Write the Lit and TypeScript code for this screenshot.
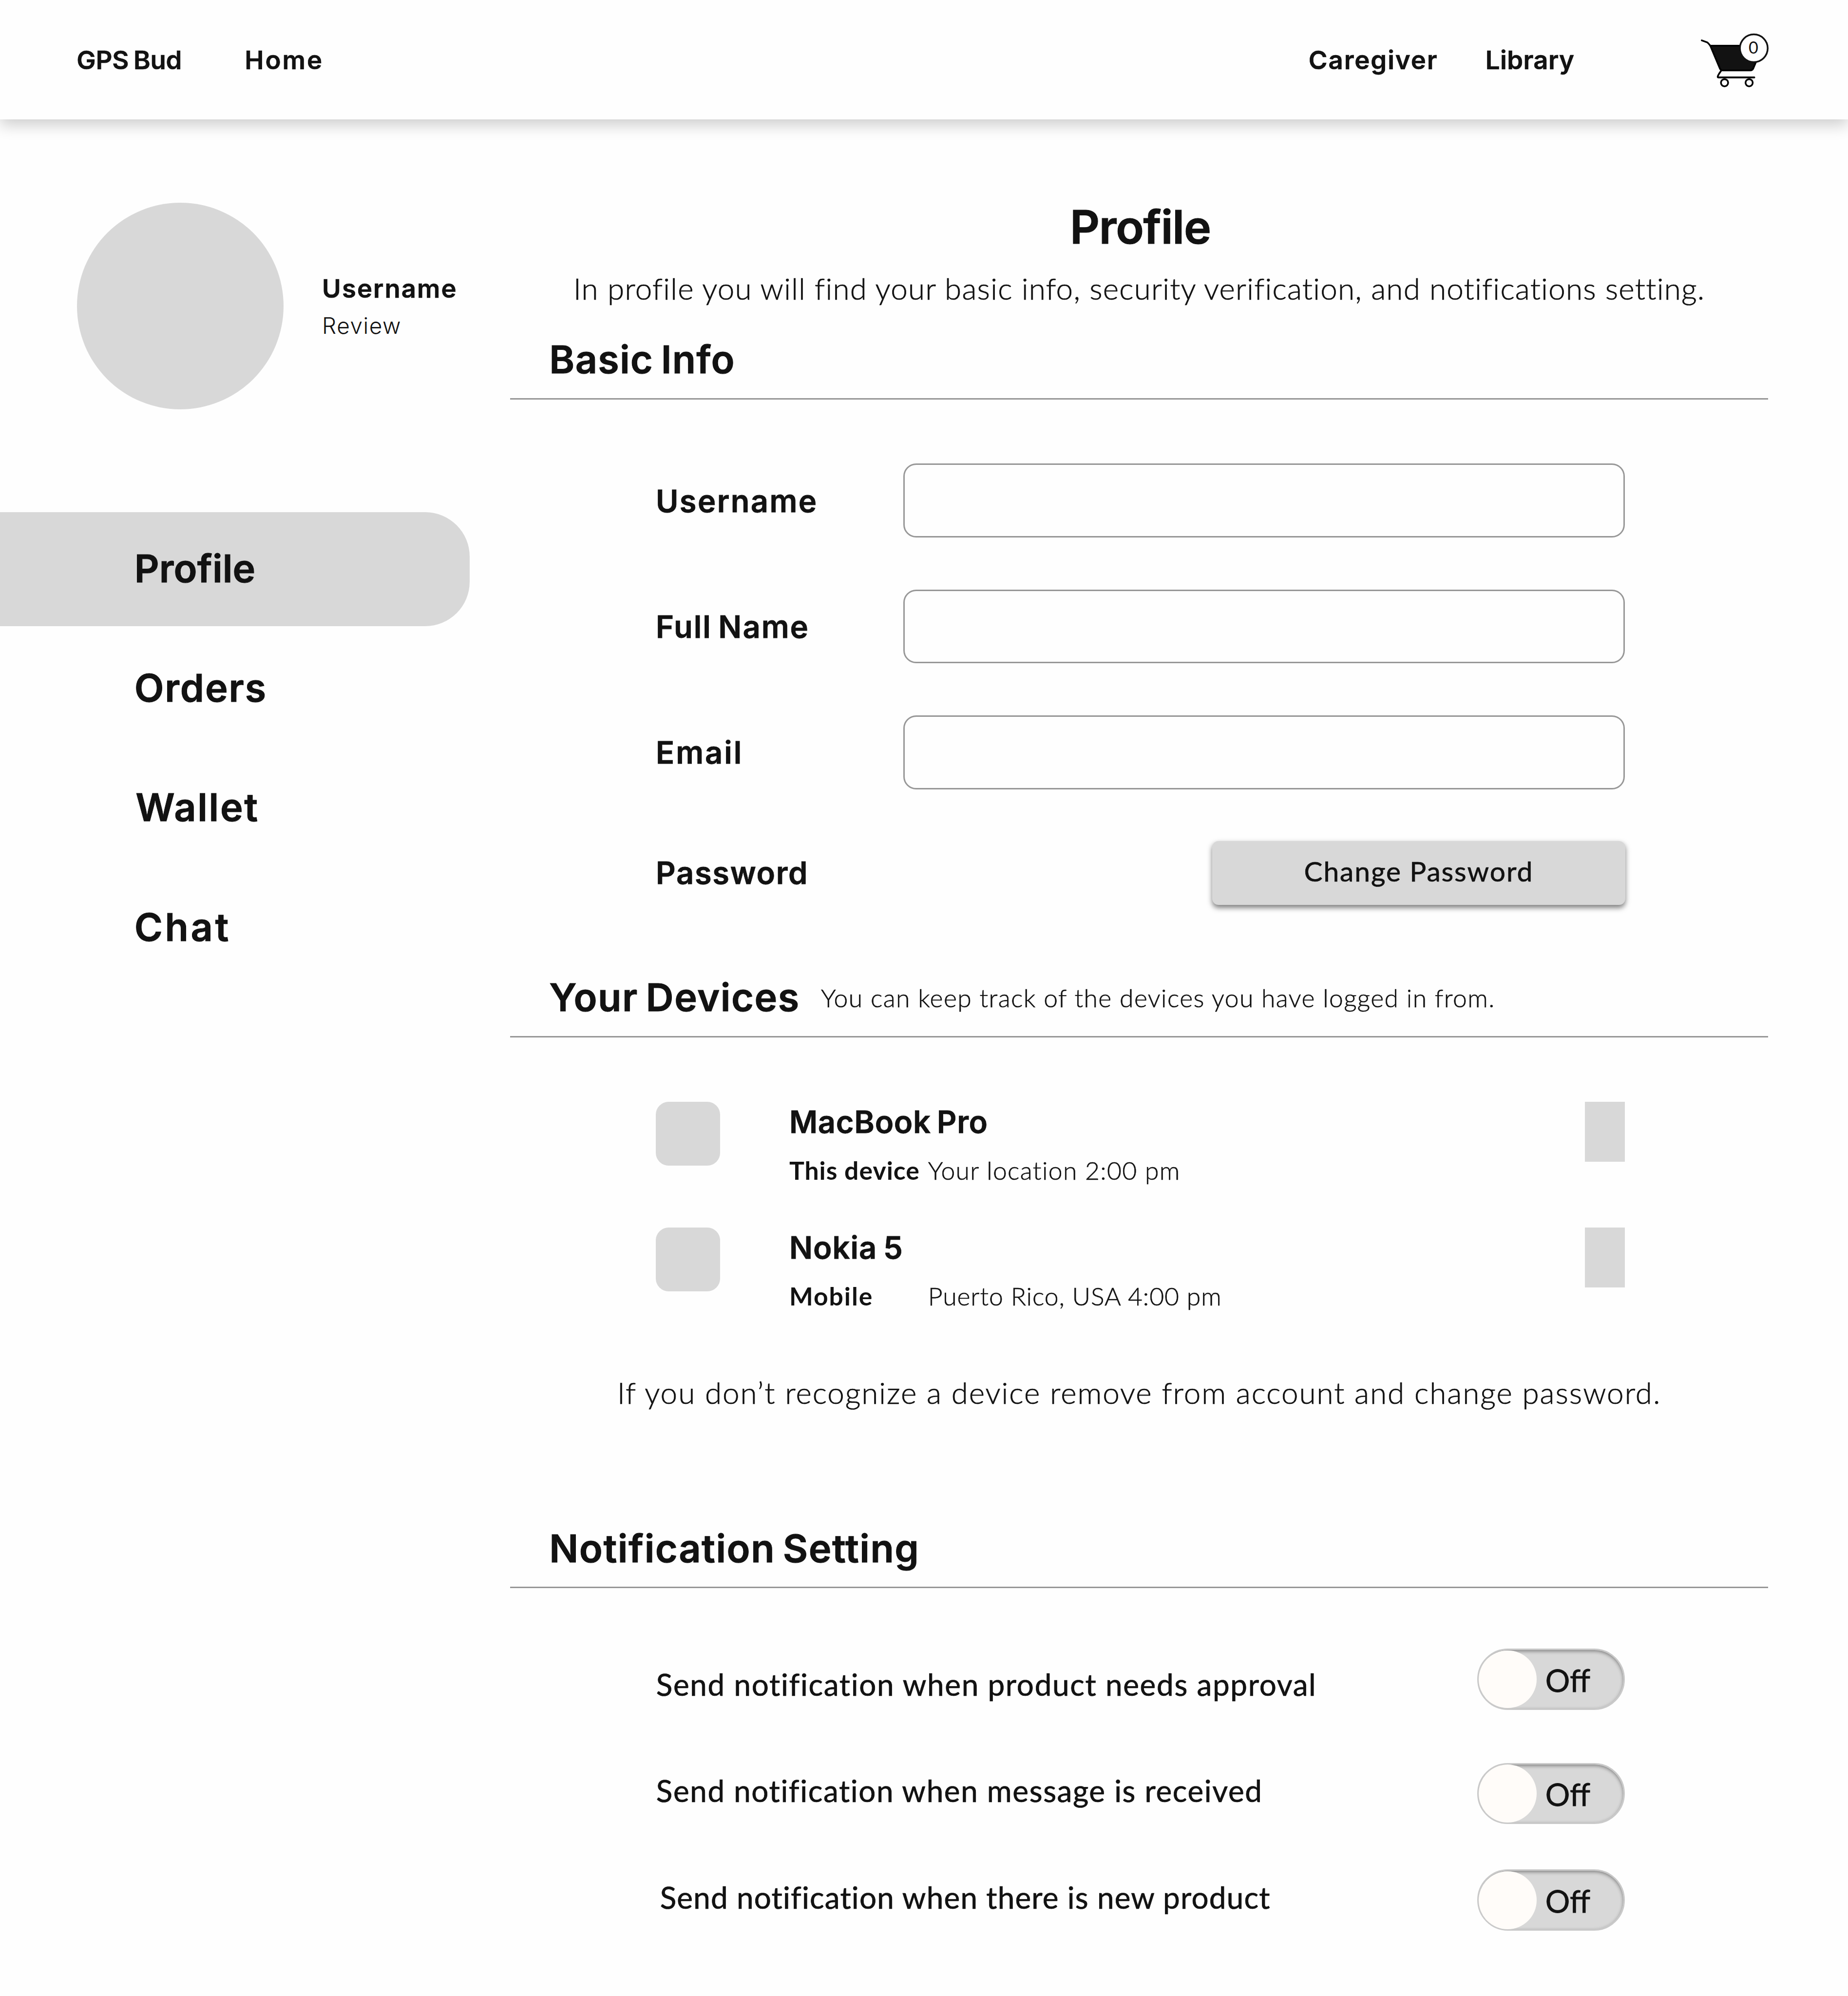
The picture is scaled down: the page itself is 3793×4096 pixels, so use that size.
import { LitElement, html, css, unsafeCSS } from 'lit';
import { customElement, property } from 'lit/decorators.js';
import { classMap } from 'lit/directives/class-map.js';

// Layout is authored on a 4320-unit wide canvas and drawn on a 3793px wide page.
const SCALE = 3793 / 4320;
const u = (n: number) => unsafeCSS(`${+(n * SCALE).toFixed(3)}px`);

const typography = css`
  *,
  *::before {
    box-sizing: border-box;
  }
  h1,
  h2,
  p,
  input,
  button {
    margin: 0;
    padding: 0;
  }
  .display {
    height: 1em;
    font-family: Inter, 'Liberation Sans', sans-serif;
    font-weight: 600;
    line-height: 1;
    white-space: nowrap;
    word-spacing: -0.07em;
    color: #121212;
    -webkit-text-stroke: 0.012em #121212;
  }
  .text {
    height: 1em;
    font-family: Lato, 'Open Sans', sans-serif;
    font-weight: 300;
    line-height: 1;
    white-space: nowrap;
    color: #121212;
    -webkit-text-stroke: 0.012em #121212;
  }
`;

@customElement('cart-icon')
export class CartIcon extends LitElement {
  @property({ type: Number }) count = 0;

  static styles = css`
    :host {
      display: block;
      width: ${u(180)};
      height: ${u(150)};
    }
    .icon {
      display: block;
      width: 100%;
      height: 100%;
    }
    .line {
      fill: none;
      stroke: #000;
      stroke-width: 4;
      stroke-linecap: round;
      stroke-linejoin: round;
    }
    .basket {
      fill: #121212;
      stroke: #000;
      stroke-width: 4;
      stroke-linejoin: round;
    }
    .badge {
      fill: #fefefe;
      stroke: #121212;
      stroke-width: 4;
    }
    .count {
      font-family: Lato, sans-serif;
      font-size: 39px;
      font-weight: 400;
      fill: #121212;
      text-anchor: middle;
    }
  `;

  render() {
    return html`
      <svg class="icon" viewBox="60 20 180 150">
        <path class="line" d="M78 54 L90.500 58.500 Q92.500 59.500 98 66.500" />
        <path class="basket" d="M98 66.500 H221 L198.500 119.500 Q196 124.300 192 124.300 H126.500 Q122.500 124.300 120.500 120 Z" />
        <path class="line" d="M123 125.500 C119 131 115.500 136 115.300 139 Q115.300 140.600 117 140.600 H201" />
        <circle class="line" cx="131.300" cy="153" r="8.400" />
        <circle class="line" cx="188.800" cy="153" r="8.400" />
        <circle class="badge" cx="199.700" cy="72.500" r="32.500" />
        <text class="count" x="198.800" y="84.500">${this.count}</text>
      </svg>
    `;
  }
}

@customElement('toggle-switch')
export class ToggleSwitch extends LitElement {
  static styles = [
    typography,
    css`
      :host {
        display: block;
      }
      .track {
        display: flex;
        align-items: center;
        gap: ${u(20.5)};
        width: ${u(345)};
        height: ${u(143)};
        border: ${u(4)} solid #c9c9c9;
        border-radius: ${u(72)};
        background: #d8d8d8;
        box-shadow: inset 0 ${u(3)} ${u(9)} rgba(0, 0, 0, 0.4);
      }
      .knob {
        flex: none;
        width: ${u(135.5)};
        height: ${u(135.5)};
        border-radius: 50%;
        background: #fffcf9;
      }
      .state {
        padding-top: ${u(1.8)};
        font-size: ${u(72)};
        font-weight: 400;
      }
    `,
  ];

  render() {
    return html`<div class="track"><span class="knob"></span><span class="text state">Off</span></div>`;
  }
}

@customElement('app-header')
export class AppHeader extends LitElement {
  static styles = [
    typography,
    css`
      :host {
        display: block;
        position: relative;
        z-index: 1;
      }
      .bar {
        display: grid;
        grid-template-columns: ${u(393)} ${u(2487)} ${u(413.5)} ${u(487.5)} auto;
        align-items: center;
        height: ${u(279)};
        padding: ${u(1.7)} 0 0 ${u(179)};
        background: #fefefe;
        box-shadow: 0 ${u(12)} ${u(34)} rgba(0, 0, 0, 0.2);
      }
      .link {
        font-size: ${u(60)};
      }
      .brand {
        letter-spacing: ${u(-0.15)};
      }
      .home {
        letter-spacing: ${u(3.4)};
      }
      .caregiver {
        letter-spacing: ${u(2.16)};
      }
      .library {
        letter-spacing: ${u(0.46)};
      }
      .cart {
        align-self: start;
        margin-top: ${u(58.3)};
      }
    `,
  ];

  render() {
    return html`
      <header class="bar">
        <a class="display link brand">GPS Bud</a>
        <a class="display link home">Home</a>
        <a class="display link caregiver">Caregiver</a>
        <a class="display link library">Library</a>
        <cart-icon class="cart" .count=${0}></cart-icon>
      </header>
    `;
  }
}

@customElement('profile-sidebar')
export class ProfileSidebar extends LitElement {
  static styles = [
    typography,
    css`
      :host {
        display: block;
      }
      .sidebar {
        padding-top: ${u(195)};
      }
      .user {
        display: flex;
        gap: ${u(90)};
        margin-left: ${u(180)};
      }
      .avatar {
        width: ${u(483)};
        height: ${u(483)};
        border-radius: 50%;
        background: #d8d8d8;
      }
      .who {
        display: flex;
        flex-direction: column;
        gap: ${u(30.6)};
        padding-top: ${u(170.2)};
      }
      .name {
        font-size: ${u(60)};
        letter-spacing: ${u(2.33)};
      }
      .review {
        font-size: ${u(52.4)};
        font-weight: 300;
        letter-spacing: ${u(1.7)};
        -webkit-text-stroke: 0;
      }
      .nav {
        display: flex;
        flex-direction: column;
        gap: ${u(12.4)};
        margin-top: ${u(240)};
      }
      .item {
        display: flex;
        align-items: center;
        width: ${u(1098)};
        height: ${u(267)};
        padding: 0 0 ${u(4)} ${u(314)};
        border-radius: 0 ${u(104)} ${u(104)} 0;
        font-size: ${u(90)};
      }
      .active {
        background: #d8d8d8;
      }
      .profile {
        letter-spacing: ${u(0.13)};
      }
      .orders {
        letter-spacing: ${u(2.11)};
      }
      .wallet {
        padding-left: ${u(317)};
        letter-spacing: ${u(3.03)};
      }
      .chat {
        letter-spacing: ${u(5.3)};
      }
    `,
  ];

  render() {
    const items = ['Profile', 'Orders', 'Wallet', 'Chat'];
    return html`
      <aside class="sidebar">
        <div class="user">
          <div class="avatar"></div>
          <div class="who">
            <div class="display name">Username</div>
            <div class="display review">Review</div>
          </div>
        </div>
        <nav class="nav">
          ${items.map(
            (label, i) => html`<a class=${classMap({ display: true, item: true, active: i === 0, [label.toLowerCase()]: true })}>${label}</a>`,
          )}
        </nav>
      </aside>
    `;
  }
}

@customElement('basic-info')
export class BasicInfo extends LitElement {
  static styles = [
    typography,
    css`
      :host {
        display: block;
      }
      .form {
        display: flex;
        flex-direction: column;
        gap: ${u(121)};
        padding: ${u(150)} ${u(335)} 0 ${u(340)};
      }
      .row {
        display: grid;
        grid-template-columns: ${u(578.5)} ${u(1686.5)};
        align-items: center;
      }
      .label {
        padding-top: ${u(0.9)};
        font-size: ${u(72)};
      }
      .username {
        letter-spacing: ${u(2.7)};
      }
      .full {
        letter-spacing: ${u(2.3)};
      }
      .email {
        letter-spacing: ${u(3.35)};
      }
      .password {
        padding-top: 0;
        letter-spacing: ${u(1.94)};
      }
      .input {
        width: 100%;
        height: ${u(173)};
        border: 3px solid #979797;
        border-radius: ${u(30)};
        background: #fefefe;
        outline: none;
      }
      .action {
        justify-self: end;
        width: ${u(965)};
        height: ${u(150)};
        margin-right: ${u(-1)};
        padding-bottom: ${u(9)};
        border: 0;
        border-radius: ${u(15)};
        background: #d8d8d8;
        box-shadow: 0 ${u(6)} ${u(12)} rgba(0, 0, 0, 0.5);
        font-size: ${u(64.7)};
        font-weight: 400;
        letter-spacing: ${u(2.2)};
      }
    `,
  ];

  render() {
    const fields = [
      { label: 'Username', cls: 'username' },
      { label: 'Full Name', cls: 'full' },
      { label: 'Email', cls: 'email' },
    ];
    return html`
      <div class="form">
        ${fields.map(
          (f) => html`
            <div class="row">
              <label class=${`display label ${f.cls}`}>${f.label}</label>
              <input class="input" />
            </div>
          `,
        )}
        <div class="row">
          <span class="display label password">Password</span>
          <button class="text action">Change Password</button>
        </div>
      </div>
    `;
  }
}

@customElement('device-list')
export class DeviceList extends LitElement {
  static styles = [
    typography,
    css`
      :host {
        display: block;
      }
      .list {
        display: flex;
        flex-direction: column;
        gap: ${u(104)};
        padding: ${u(150)} ${u(335)} 0 ${u(340)};
      }
      .device {
        display: flex;
        align-items: flex-start;
        height: ${u(190)};
      }
      .thumb {
        width: ${u(150)};
        height: ${u(150)};
        border-radius: ${u(30)};
        background: #d8d8d8;
      }
      .info {
        display: flex;
        flex-direction: column;
        gap: ${u(47.4)};
        padding: ${u(11.8)} 0 0 ${u(162)};
      }
      .name {
        font-size: ${u(72)};
        letter-spacing: ${u(0.76)};
      }
      .name.mobile {
        letter-spacing: ${u(1.2)};
      }
      .meta {
        display: grid;
        grid-template-columns: ${u(324.5)} auto;
        font-size: ${u(58.8)};
      }
      .kind {
        font-weight: 700;
        letter-spacing: ${u(1.2)};
        -webkit-text-stroke: 0;
      }
      .kind.mobile {
        letter-spacing: ${u(2.3)};
      }
      .place {
        letter-spacing: ${u(1.55)};
      }
      .place.mobile {
        letter-spacing: ${u(1.05)};
      }
      .remove {
        width: ${u(93)};
        height: ${u(140)};
        margin-left: auto;
        background: #d8d8d8;
      }
      .note {
        margin-top: ${u(161.2)};
        font-size: ${u(70.56)};
        letter-spacing: ${u(2.25)};
        text-align: center;
      }
    `,
  ];

  render() {
    const devices = [
      { name: 'MacBook Pro', kind: 'This device', place: 'Your location 2:00 pm', mobile: false },
      { name: 'Nokia 5', kind: 'Mobile', place: 'Puerto Rico, USA 4:00 pm', mobile: true },
    ];
    return html`
      <div class="list">
        ${devices.map(
          (d) => html`
            <div class="device">
              <span class="thumb"></span>
              <div class="info">
                <div class=${classMap({ display: true, name: true, mobile: d.mobile })}>${d.name}</div>
                <div class="text meta">
                  <span class=${classMap({ kind: true, mobile: d.mobile })}>${d.kind}</span>
                  <span class=${classMap({ place: true, mobile: d.mobile })}>${d.place}</span>
                </div>
              </div>
              <span class="remove"></span>
            </div>
          `,
        )}
      </div>
      <p class="text note">If you don’t recognize a device remove from account and change password.</p>
    `;
  }
}

@customElement('notification-settings')
export class NotificationSettings extends LitElement {
  static styles = [
    typography,
    css`
      :host {
        display: block;
      }
      .settings {
        display: flex;
        justify-content: space-between;
        padding: ${u(141)} ${u(335)} 0 ${u(341)};
      }
      .labels {
        display: flex;
        flex-direction: column;
        gap: ${u(178.44)};
        padding-top: ${u(48.4)};
      }
      .label {
        font-size: ${u(70.56)};
        font-weight: 400;
      }
      .approval {
        letter-spacing: ${u(1.93)};
      }
      .message {
        letter-spacing: ${u(1.85)};
      }
      .product {
        padding-left: ${u(9)};
        letter-spacing: ${u(1.38)};
      }
      .toggles {
        display: flex;
        flex-direction: column;
        gap: ${u(106)};
      }
      .toggle:first-child {
        margin-bottom: ${u(18)};
      }
    `,
  ];

  render() {
    const settings = [
      { cls: 'approval', label: 'Send notification when product needs approval' },
      { cls: 'message', label: 'Send notification when message is received' },
      { cls: 'product', label: 'Send notification when there is new product' },
    ];
    return html`
      <div class="settings">
        <div class="labels">${settings.map((s) => html`<span class=${`text label ${s.cls}`}>${s.label}</span>`)}</div>
        <div class="toggles">${settings.map(() => html`<toggle-switch class="toggle"></toggle-switch>`)}</div>
      </div>
    `;
  }
}

@customElement('app-root')
export class AppRoot extends LitElement {
  static styles = [
    typography,
    css`
      :host {
        display: block;
        width: 3793px;
        min-height: 4096px;
        background: #fefefe;
      }
      .body {
        display: grid;
        grid-template-columns: ${u(1193)} ${u(2940)};
      }
      .title {
        margin-top: ${u(197.7)};
        padding-left: ${u(5)};
        font-size: ${u(108)};
        letter-spacing: ${u(-1.43)};
        text-align: center;
      }
      .intro {
        margin-top: ${u(54.5)};
        font-size: ${u(70.56)};
        letter-spacing: ${u(1.4)};
        text-align: center;
      }
      .section {
        display: grid;
        grid-template-columns: ${u(635)} auto;
        padding: 0 0 ${u(45)} ${u(91)};
        border-bottom: 3px solid #979797;
      }
      .heading {
        font-size: ${u(90)};
      }
      .hint {
        padding-top: ${u(17)};
        font-size: ${u(58.8)};
        letter-spacing: ${u(1.6)};
      }
      .basic {
        margin-top: ${u(85.5)};
      }
      .basic .heading {
        letter-spacing: ${u(1.4)};
      }
      .devices {
        margin-top: ${u(170.8)};
      }
      .devices .heading {
        letter-spacing: ${u(1.7)};
      }
      .notifications {
        margin-top: ${u(283.5)};
      }
      .notifications .heading {
        letter-spacing: ${u(1.7)};
      }
    `,
  ];

  render() {
    return html`
      <app-header></app-header>
      <div class="body">
        <profile-sidebar></profile-sidebar>
        <main>
          <h1 class="display title">Profile</h1>
          <p class="text intro">In profile you will find your basic info, security verification, and notifications setting.</p>
          <div class="section basic"><h2 class="display heading">Basic Info</h2></div>
          <basic-info></basic-info>
          <div class="section devices">
            <h2 class="display heading">Your Devices</h2>
            <p class="text hint">You can keep track of the devices you have logged in from.</p>
          </div>
          <device-list></device-list>
          <div class="section notifications"><h2 class="display heading">Notification Setting</h2></div>
          <notification-settings></notification-settings>
        </main>
      </div>
    `;
  }
}
